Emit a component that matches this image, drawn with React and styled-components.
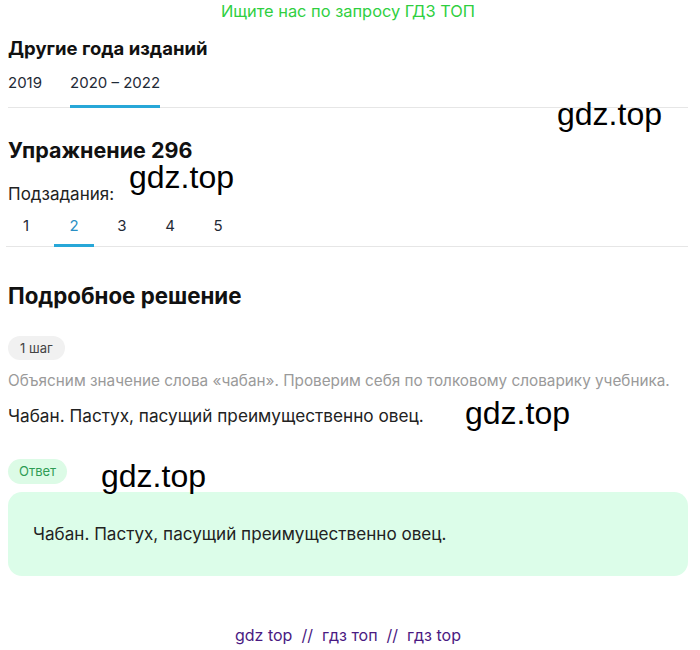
import styled, { createGlobalStyle } from 'styled-components'

const Global = createGlobalStyle`
  html, body { margin: 0; padding: 0; background: #fff; }
  body { font-family: Inter, "Noto Sans", sans-serif; color: #1a1a1a; }
`

const Page = styled.div`
  position: relative;
  width: 700px;
  height: 650px;
  box-sizing: border-box;
  padding: 0 12px 0 8px;
  display: flex;
  flex-direction: column;
`

const Promo = styled.div`
  text-align: center;
  color: #2fcf3f;
  font-size: 16.4px;
  line-height: 22px;
`

const SectionTitle = styled.h2`
  margin: ${({ $top }) => $top}px 0 0;
  font-size: ${({ $size }) => $size}px;
  font-weight: 700;
  line-height: ${({ $lh }) => $lh}px;
  color: #111;
`

const TabBar = styled.div`
  display: flex;
  gap: ${({ $gap }) => $gap || 0}px;
  border-bottom: 1px solid #e6e6e6;
  margin: ${({ $top }) => $top}px 0 0 ${({ $left }) => $left || 0}px;
`

const YearTab = styled.div`
  font-size: 15px;
  line-height: 20px;
  padding-bottom: 12px;
  color: #1f2a36;
  border-bottom: 3px solid ${({ $active }) => ($active ? '#27a7d8' : 'transparent')};
  margin-bottom: -1px;
`

const SubTab = styled.div`
  width: 40px;
  text-align: center;
  font-size: 15px;
  line-height: 20px;
  padding-bottom: 8px;
  color: ${({ $active }) => ($active ? '#2a8fc4' : '#1f2a36')};
  border-bottom: 3px solid ${({ $active }) => ($active ? '#27a7d8' : 'transparent')};
  margin-bottom: -1px;
`

const Label = styled.div`
  font-size: 17px;
  line-height: 22px;
  color: #222;
  margin-top: 20px;
`

const Pill = styled.span`
  align-self: flex-start;
  font-size: 13px;
  line-height: ${({ $h }) => $h}px;
  padding: 0 ${({ $green }) => ($green ? 11 : 12)}px;
  border-radius: 13px;
  background: ${({ $green }) => ($green ? '#dcfbe6' : '#f1f1f1')};
  color: ${({ $green }) => ($green ? '#2e9c55' : '#444')};
  margin-top: ${({ $top }) => $top}px;
`

const Hint = styled.p`
  margin: 11px 0 0;
  font-size: 15.3px;
  line-height: 20px;
  color: #9a9a9a;
  white-space: nowrap;
`

const Body = styled.p`
  margin: 14px 0 0;
  font-size: 17.2px;
  line-height: 22px;
  color: #222;
`

const AnswerBox = styled.div`
  margin-top: 8px;
  background: #dcfde9;
  border-radius: 14px;
  padding: 31px 25px;
  font-size: 17.1px;
  line-height: 22px;
  color: #222;
`

const Footer = styled.div`
  margin-top: auto;
  margin-bottom: 5px;
  text-align: center;
  color: #4a1a82;
  font-size: 16px;
  line-height: 20px;
`

const Watermark = styled.span`
  position: absolute;
  left: ${({ $x }) => $x}px;
  top: ${({ $y }) => $y}px;
  font-family: "Liberation Sans", Arial, sans-serif;
  font-size: 32px;
  line-height: 36px;
  color: #000;
  pointer-events: none;
`

export default function App() {
  return (
    <Page>
      <Global />
      <Promo>Ищите нас по запросу ГДЗ ТОП</Promo>
      <SectionTitle $size={18.5} $lh={24} $top={14}>Другие года изданий</SectionTitle>
      <TabBar $gap={28} $top={13}>
        <YearTab>2019</YearTab>
        <YearTab $active>2020 – 2022</YearTab>
      </TabBar>
      <SectionTitle $size={21.5} $lh={26} $top={29}>Упражнение 296</SectionTitle>
      <Label>Подзадания:</Label>
      <TabBar $gap={8} $top={11} $left={-2}>
        {[1, 2, 3, 4, 5].map((n) => (
          <SubTab key={n} $active={n === 2}>{n}</SubTab>
        ))}
      </TabBar>
      <SectionTitle $size={22.3} $lh={28} $top={35}>Подробное решение</SectionTitle>
      <Pill $h={24} $top={26}>1 шаг</Pill>
      <Hint>Объясним значение слова «чабан». Проверим себя по толковому словарику учебника.</Hint>
      <Body>Чабан. Пастух, пасущий преимущественно овец.</Body>
      <Pill $green $h={25} $top={32}>Ответ</Pill>
      <AnswerBox>Чабан. Пастух, пасущий преимущественно овец.</AnswerBox>
      <Footer>gdz top&nbsp; //&nbsp; гдз топ&nbsp; //&nbsp; гдз top</Footer>

      <Watermark $x={557} $y={96}>gdz.top</Watermark>
      <Watermark $x={129} $y={159}>gdz.top</Watermark>
      <Watermark $x={465} $y={395}>gdz.top</Watermark>
      <Watermark $x={101} $y={458}>gdz.top</Watermark>
    </Page>
  )
}
